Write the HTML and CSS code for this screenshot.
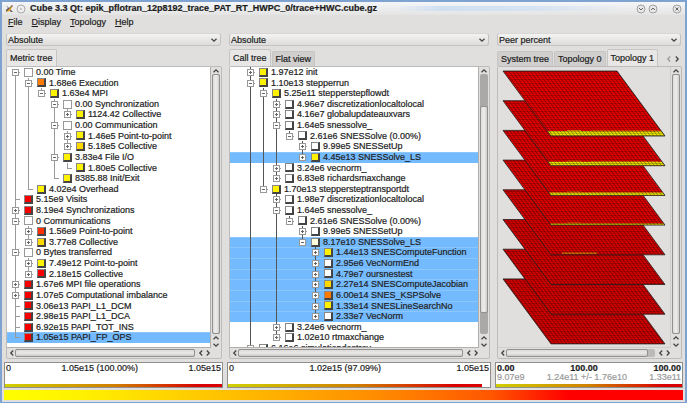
FILE: index.html
```html
<!DOCTYPE html>
<html lang="en">
<head>
<meta charset="utf-8">
<title>Cube 3.3 Qt</title>
<link rel="stylesheet" href="styles.css">
</head>
<body>
<svg class="defs" aria-hidden="true">
  <symbol id="down" viewBox="0 0 8 8"><path d="M1.5 2.8 4 5.2 6.500 2.800"/></symbol>
  <symbol id="up" viewBox="0 0 8 8"><path d="M1.5 5.2 4 2.800 6.500 5.200"/></symbol>
  <symbol id="left" viewBox="0 0 8 8"><path d="M5.200 1.500 2.800 4 5.200 6.500"/></symbol>
  <symbol id="right" viewBox="0 0 8 8"><path d="M2.800 1.500 5.200 4 2.800 6.500"/></symbol>
</svg>
<div class="window">
  <header class="titlebar">
    <svg class="app-icon" viewBox="0 0 9 9"><path d="M1 1l3 3 3-3 1 1-3 3 3 3H6L4 6 1 8V6l2-2z" fill="#555"/><path d="M1 8l7-7-3 6z" fill="#e9a030"/></svg>
    <svg class="round" viewBox="0 0 10 10"><circle cx="5" cy="5" r="4" fill="#eee" stroke="#aaa"/><circle cx="5" cy="5" r="1" fill="#bbb"/></svg>
    <h1 class="title">Cube 3.3 Qt: epik_pflotran_12p8192_trace_PAT_RT_HWPC_0/trace+HWC.cube.gz</h1>
    <span class="shine"></span>
    <button class="win-btn" aria-label="Minimize"><svg viewBox="0 0 10 10"><circle cx="5" cy="5" r="4"/><path d="M3 4l2 2 2-2"/></svg></button>
    <button class="win-btn" aria-label="Maximize"><svg viewBox="0 0 10 10"><circle cx="5" cy="5" r="4"/><path d="M3 6l2-2 2 2"/></svg></button>
    <button class="win-btn close" aria-label="Close"><svg viewBox="0 0 10 10"><circle cx="5" cy="5" r="4"/><path d="M3.500 3.500l3 3M6.500 3.500l-3 3"/></svg></button>
  </header>
  <nav class="menu">
    <button><u>F</u>ile</button>
    <button><u>D</u>isplay</button>
    <button><u>T</u>opology</button>
    <button><u>H</u>elp</button>
  </nav>

  <main class="panels">
    <section class="panel">
      <div class="combo"><select aria-label="Metric values"><option>Absolute</option></select><svg class="ico"><use href="#down"/></svg></div>
      <div class="tabs"><button class="tab active">Metric tree</button></div>
      <div class="frame">
        <div class="viewport"><div class="tree metric" id="metric"></div></div>
        <div class="vbar"><button aria-label="Up"><svg class="ico"><use href="#up"/></svg></button><span class="track"><span class="thumb full"></span></span><button aria-label="Page up"><svg class="ico"><use href="#up"/></svg></button><button aria-label="Down"><svg class="ico"><use href="#down"/></svg></button></div>
        <div class="hbar"><button aria-label="Left"><svg class="ico"><use href="#left"/></svg></button><span class="track"><span class="thumb full"></span></span><button aria-label="Page left"><svg class="ico"><use href="#left"/></svg></button><button aria-label="Right"><svg class="ico"><use href="#right"/></svg></button></div>
      </div>
      <div class="values"><div class="line"><span>0</span><span>1.05e15 (100.00%)</span><span>1.05e15</span></div><div class="strip"></div></div>
    </section>

    <section class="panel">
      <div class="combo"><select aria-label="Call values"><option>Absolute</option></select><svg class="ico"><use href="#down"/></svg></div>
      <div class="tabs"><button class="tab active">Call tree</button><button class="tab">Flat view</button></div>
      <div class="frame">
        <div class="viewport"><div class="tree call" id="call"></div></div>
        <div class="vbar"><button aria-label="Up"><svg class="ico"><use href="#up"/></svg></button><span class="track"><span class="thumb mid"></span></span><button aria-label="Page up"><svg class="ico"><use href="#up"/></svg></button><button aria-label="Down"><svg class="ico"><use href="#down"/></svg></button></div>
        <div class="hbar"><button aria-label="Left"><svg class="ico"><use href="#left"/></svg></button><span class="track"><span class="thumb full"></span></span><button aria-label="Page left"><svg class="ico"><use href="#left"/></svg></button><button aria-label="Right"><svg class="ico"><use href="#right"/></svg></button></div>
      </div>
      <div class="values"><div class="line"><span>0</span><span>1.02e15 (97.09%)</span><span>1.05e15</span></div><div class="strip most"></div></div>
    </section>

    <section class="panel">
      <div class="combo"><select aria-label="System values"><option>Peer percent</option></select><svg class="ico"><use href="#down"/></svg></div>
      <div class="tabs"><button class="tab">System tree</button><button class="tab">Topology 0</button><button class="tab active">Topology 1</button><span class="tab-nav"><svg class="ico faint"><use href="#left"/></svg><svg class="ico"><use href="#right"/></svg></span></div>
      <div class="frame">
        <div class="viewport plain">
          <svg class="topology" id="topology" viewBox="0 0 172 280" role="img" aria-label="Topology 1">
            <defs>
              <pattern id="cells" width="3.6" height="4" patternUnits="userSpaceOnUse" patternTransform="skewX(36.5)">
                <path d="M0 .5H3.600M0 2.500H3.600" stroke="#000" stroke-opacity=".4" stroke-width=".7"/>
                <path d="M.5 0V4" stroke="#000" stroke-opacity=".4" stroke-width=".8"/>
              </pattern>
            </defs>
          </svg>
        </div>
        <div class="vbar"><button aria-label="Up"><svg class="ico"><use href="#up"/></svg></button><span class="track"><span class="thumb full"></span></span><button aria-label="Page up"><svg class="ico"><use href="#up"/></svg></button><button aria-label="Down"><svg class="ico"><use href="#down"/></svg></button></div>
        <div class="hbar"><button aria-label="Left"><svg class="ico"><use href="#left"/></svg></button><span class="track"><span class="thumb wide"></span></span><button aria-label="Page left"><svg class="ico"><use href="#left"/></svg></button><button aria-label="Right"><svg class="ico"><use href="#right"/></svg></button></div>
      </div>
      <div class="values"><div class="line bold"><span>0.00</span><span>100.00</span><span>100.00</span></div><div class="line dim"><span>9.07e9</span><span>1.24e11 +/- 1.76e10</span><span>1.33e11</span></div><div class="strip"></div></div>
    </section>
  </main>
  <footer class="legend"></footer>
</div>
<script src="app.js"></script>
</body>
</html>
```
FILE: styles.css
```css
* { box-sizing: border-box; }
body {
  margin: 0;
  font: 9px/10px "Liberation Sans", Arial, sans-serif;
  color: #1c1c1c;
  -webkit-text-stroke: 0.2px currentColor;
}
button, select {
  font: inherit;
  color: inherit;
  margin: 0;
  padding: 0;
  border: 0;
  background: none;
  -webkit-text-stroke: inherit;
}
.defs { position: absolute; width: 0; height: 0; }
.ico { width: 8px; height: 8px; fill: none; stroke: #444; stroke-width: 1.3; display: block; flex: none; }
.ico.faint { stroke: #999; }

.window {
  min-height: 100vh;
  display: flex;
  flex-direction: column;
  padding: 0 2px 2px;
  border: 2px solid #7fa3d0;
  background: #e0dfde;
}
.titlebar {
  display: flex;
  align-items: center;
  height: 13px;
  gap: 2px;
  margin: 0 -2px;
  padding: 0 3px;
  background: linear-gradient(#f4f6f9, #e4e4e3);
}
.app-icon { width: 9px; height: 9px; flex: none; }
.round { width: 10px; height: 10px; flex: none; }
.title { margin: 0 0 0 2px; font-size: 9px; line-height: 13px; white-space: nowrap; }
.shine {
  flex: 1;
  height: 5px;
  margin: 0 8px 0 16px;
  background: linear-gradient(90deg, transparent, #cfe0f3 20%, #d6e3f2 60%, transparent);
}
.win-btn { width: 10px; height: 10px; flex: none; }
.win-btn.close { margin-left: 12px; }
.win-btn svg { display: block; fill: #e8e8e8; stroke: #555; stroke-width: 0.9; }
.win-btn circle { stroke: #999; }
.menu { display: flex; gap: 9px; height: 14px; padding: 0 4px; }
.menu u { text-underline-offset: 1px; }

.panels {
  flex: 1;
  display: grid;
  grid-template-columns: 219fr 264fr 188fr;
  gap: 4px;
  padding-top: 4px;
}
.panel { display: flex; flex-direction: column; min-width: 0; }
.combo {
  display: flex;
  align-items: center;
  height: 13px;
  margin: 0 2px 3px;
  padding: 0 2px 0 1px;
  border: 1px solid #c4c3c2;
  border-top-color: #d8d7d6;
  border-radius: 3px;
  background: linear-gradient(#f3f3f2, #dddcdb);
}
.combo select { appearance: none; flex: 1; height: 11px; outline: 0; }
.tabs { display: flex; height: 17px; margin: 0 2px; align-items: flex-end; gap: 1px; }
.tab {
  height: 15px;
  padding: 0 3px;
  border: 1px solid #c6c5c4;
  border-bottom: 0;
  border-radius: 2px 2px 0 0;
  background: #d0cfce;
  white-space: nowrap;
}
.tab.active { height: 17px; background: #e8e7e6; }
.tab-nav { display: flex; align-items: center; height: 15px; margin-left: auto; }

.frame {
  flex: 1;
  display: grid;
  grid-template: 1fr 10px / 1fr 10px;
  margin: 0 1px 3px 2px;
  border: 1px solid #bdbcbb;
  border-radius: 2px;
}
.viewport {
  display: grid;
  overflow: hidden;
  border-right: 1px solid #b0afae;
  border-bottom: 1px solid #b0afae;
  background: #fff;
}
.viewport.plain { background: #e0dfde; border-color: #cfcecd; }
.tree {
  display: grid;
  grid-template-rows: repeat(26, 1fr);
  grid-auto-rows: 0;
  padding-bottom: 4px;
  color: #222;
}
.row { display: flex; align-items: stretch; min-height: 10px; white-space: nowrap; line-height: 10px; }
.metric .row { padding-left: 2px; --rule: #999; }
.call .row { padding-left: 14px; --rule: #555; }
.row.selected { background: #74baff; box-shadow: inset 0 1px #8cc6ff; }
.cell { position: relative; width: 13px; flex: none; }
.cell.pass::before, .cell.node::before {
  content: "";
  position: absolute;
  left: 6px;
  top: 0;
  bottom: 0;
  border-left: 1px solid var(--rule);
}
.cell.first::before { top: 50%; }
.cell.last::before { bottom: 50%; }
.cell.node::after {
  content: "";
  position: absolute;
  left: 6px;
  top: 5px;
  width: 5px;
  border-top: 1px solid #999;
}
.toggle {
  position: absolute;
  z-index: 1;
  left: 3px;
  top: 2px;
  width: 7px;
  height: 7px;
  border: 1px solid #999;
  background: #fff;
}
.toggle::before, .toggle.plus::after { content: ""; position: absolute; background: #666; }
.toggle::before { left: 1px; top: 2px; width: 3px; height: 1px; }
.toggle.plus::after { left: 2px; top: 1px; width: 1px; height: 3px; }
.swatch {
  flex: none;
  align-self: center;
  width: 9px;
  height: 9px;
  margin: 0 3px 0 2px;
  border: 1px solid #888;
  border-right: 2px solid #444;
  border-bottom: 2px solid #444;
}
.metric .swatch.white { border: 1px solid #999; }
.white { background: #fff; }
.cream { background: #ffffdc; }
.yellow { background: #fff200; }
.gold { background: #ffd800; }
.orange { background: #ff7a00; }
.scarlet { background: #ff3000; }
.red { background: #f80000; }

.topology { width: 100%; height: 100%; display: block; }

.vbar, .hbar { display: flex; }
.vbar { flex-direction: column; align-items: center; }
.hbar { align-items: center; padding-left: 1px; }
.vbar .track { flex: 1; width: 8px; display: flex; background: #aaa9a8; border-radius: 2px; }
.hbar .track { flex: 1; height: 8px; display: flex; background: #bbbab9; border-radius: 2px; margin: 0 2px 0 0; }
.vbar button { height: 7px; }
.hbar button { width: 7px; }
.thumb { border: 1px solid #929190; border-radius: 2px; }
.vbar .thumb { width: 100%; background: linear-gradient(90deg, #dcdbda, #efeeee, #cfcecd); }
.hbar .thumb { width: 100%; background: linear-gradient(#dcdbda, #e9e8e8, #cbcac9); }
.vbar .thumb.mid { margin: 32px 0 21px; }
.hbar .thumb.wide { width: 95%; }

.values {
  display: flex;
  flex-direction: column;
  height: 26px;
  border: 1px solid #8f8e8d;
  background: #fff;
}
.line {
  display: flex;
  justify-content: space-between;
  line-height: 10px;
  padding: 0 1px;
}
.line.bold { font-weight: bold; }
.line.dim { color: #999; line-height: 8px; }
.strip { height: 3px; margin-top: auto; background: linear-gradient(90deg, #d0d000, #d08000 50%, #d80000 90%); }
.strip.most { width: 97%; }
.legend {
  height: 10px;
  margin-top: 2px;
  background: linear-gradient(90deg, #ff0, #fff000 12%, #ffc000 33%, #ff8c00 55%, #f50 72%, #f00 83%);
}
```
FILE: app.js
```js
// Rows: [depth, toggle ("+", "-" or ""), swatch, label, selected]
const metric = [
  [0, "-", "white", "0.00 Time"],
  [1, "-", "orange", "1.68e6 Execution"],
  [2, "-", "yellow", "1.63e4 MPI"],
  [3, "-", "white", "0.00 Synchronization"],
  [4, "+", "yellow", "1124.42 Collective"],
  [3, "-", "white", "0.00 Communication"],
  [4, "+", "yellow", "1.46e5 Point-to-point"],
  [4, "+", "gold", "5.18e5 Collective"],
  [3, "-", "yellow", "3.83e4 File I/O"],
  [4, "", "yellow", "1.80e5 Collective"],
  [3, "", "yellow", "8385.88 Init/Exit"],
  [1, "", "yellow", "4.02e4 Overhead"],
  [0, "", "red", "5.15e9 Visits"],
  [0, "+", "red", "8.19e4 Synchronizations"],
  [0, "-", "white", "0 Communications"],
  [1, "+", "scarlet", "1.56e9 Point-to-point"],
  [1, "+", "gold", "3.77e8 Collective"],
  [0, "-", "white", "0 Bytes transferred"],
  [1, "+", "yellow", "7.49e12 Point-to-point"],
  [1, "+", "red", "2.18e15 Collective"],
  [0, "+", "red", "1.67e6 MPI file operations"],
  [0, "+", "red", "1.07e5 Computational imbalance"],
  [0, "", "red", "3.06e13 PAPI_L1_DCM"],
  [0, "", "red", "2.98e15 PAPI_L1_DCA"],
  [0, "", "red", "6.92e15 PAPI_TOT_INS"],
  [0, "", "red", "1.05e15 PAPI_FP_OPS", true]
];
const call = [
  [0, "+", "yellow", "1.97e12 init"],
  [0, "-", "yellow", "1.10e13 stepperrun"],
  [1, "-", "yellow", "5.25e11 stepperstepflowdt"],
  [2, "+", "white", "4.96e7 discretizationlocaltolocal"],
  [2, "+", "white", "4.16e7 globalupdateauxvars"],
  [2, "-", "white", "1.64e5 snessolve_"],
  [3, "-", "white", "2.61e6 SNESSolve (0.00%)"],
  [4, "+", "white", "9.99e5 SNESSetUp"],
  [4, "+", "yellow", "4.45e13 SNESSolve_LS", true],
  [2, "+", "white", "3.24e6 vecnorm_"],
  [2, "+", "white", "6.83e8 richardsmaxchange"],
  [1, "-", "yellow", "1.70e13 steppersteptransportdt"],
  [2, "+", "white", "1.98e7 discretizationlocaltolocal"],
  [2, "-", "white", "1.64e5 snessolve_"],
  [3, "-", "white", "2.61e6 SNESSolve (0.00%)"],
  [4, "+", "white", "9.99e5 SNESSetUp"],
  [4, "-", "cream", "8.17e10 SNESSolve_LS", true],
  [5, "+", "yellow", "1.44e13 SNESComputeFunction", true],
  [5, "+", "white", "2.95e6 VecNormEnd", true],
  [5, "+", "white", "4.79e7 oursnestest", true],
  [5, "+", "gold", "2.27e14 SNESComputeJacobian", true],
  [5, "+", "orange", "6.00e14 SNES_KSPSolve", true],
  [5, "+", "yellow", "1.33e14 SNESLineSearchNo", true],
  [5, "+", "white", "2.33e7 VecNorm", true],
  [2, "+", "white", "3.24e6 vecnorm_"],
  [2, "+", "white", "1.02e10 rtmaxchange"],
  [0, "+", "white", "6.16e6 simulationdestroy"]
];

function drawTree(id, rows) {
  // True when another row of the given depth follows under the same parent.
  const continues = (i, depth) => {
    const next = rows.slice(i + 1).find(r => r[0] <= depth);
    return Boolean(next) && next[0] === depth;
  };
  document.getElementById(id).innerHTML = rows.map(([depth, toggle, swatch, label, selected], i) => {
    let cells = "";
    for (let d = 0; d < depth; d++) cells += `<span class="cell${continues(i, d) ? " pass" : ""}"></span>`;
    const edge = (id === "metric" && i === 0 ? " first" : "") + (continues(i, depth) ? "" : " last");
    const box = toggle ? `<span class="toggle${toggle === "+" ? " plus" : ""}"></span>` : "";
    return `<div class="row${selected ? " selected" : ""}">${cells}<span class="cell node${edge}">${box}</span><span class="swatch ${swatch}"></span><span>${label}</span></div>`;
  }).join("");
}
drawTree("metric", metric);
drawTree("call", call);

// Eight stacked planes, the first one on top; band = height of the low-load edge.
const bands = [5, 4, 3, 1.5, 0, 0, 0, 0];
const reds = ["#f40000", "#f00000", "#f00000", "#ec0000", "#e40000", "#e00000", "#e00000", "#e00000"];
const H = 65, W = 114, SHIFT = 48, LEFT = 5;
let planes = "";
for (let i = 7; i >= 0; i--) {
  const y = 4 + i * 29.700, b = y + H;
  const x = LEFT + SHIFT;
  const outline = `M${LEFT} ${y}H${LEFT + W}L${x + W} ${b}H${x}Z`;
  planes += `<path d="${outline}" fill="${reds[i]}"/>`;
  const h = bands[i], s = h * SHIFT / H;
  if (h) {
    planes += `<path d="M${x - s} ${b - h}H${x + W - s}L${x + W} ${b}H${x}Z" fill="#f4ee00"/>`;
    planes += `<path d="M${x + 16} ${b - h - .5}h14M${x + 40} ${b - h}h${W - 46}" stroke="#e88000" fill="none"/>`;
  }
  if (i === 4) planes += `<path d="M${x + 11} ${b - 1.500}h35" stroke="#e88000" stroke-width="1.500"/>`;
  planes += `<path d="${outline}" fill="url(#cells)" stroke="#222" stroke-width=".8"/>`;
}
document.getElementById("topology").insertAdjacentHTML("beforeend", planes);
```
